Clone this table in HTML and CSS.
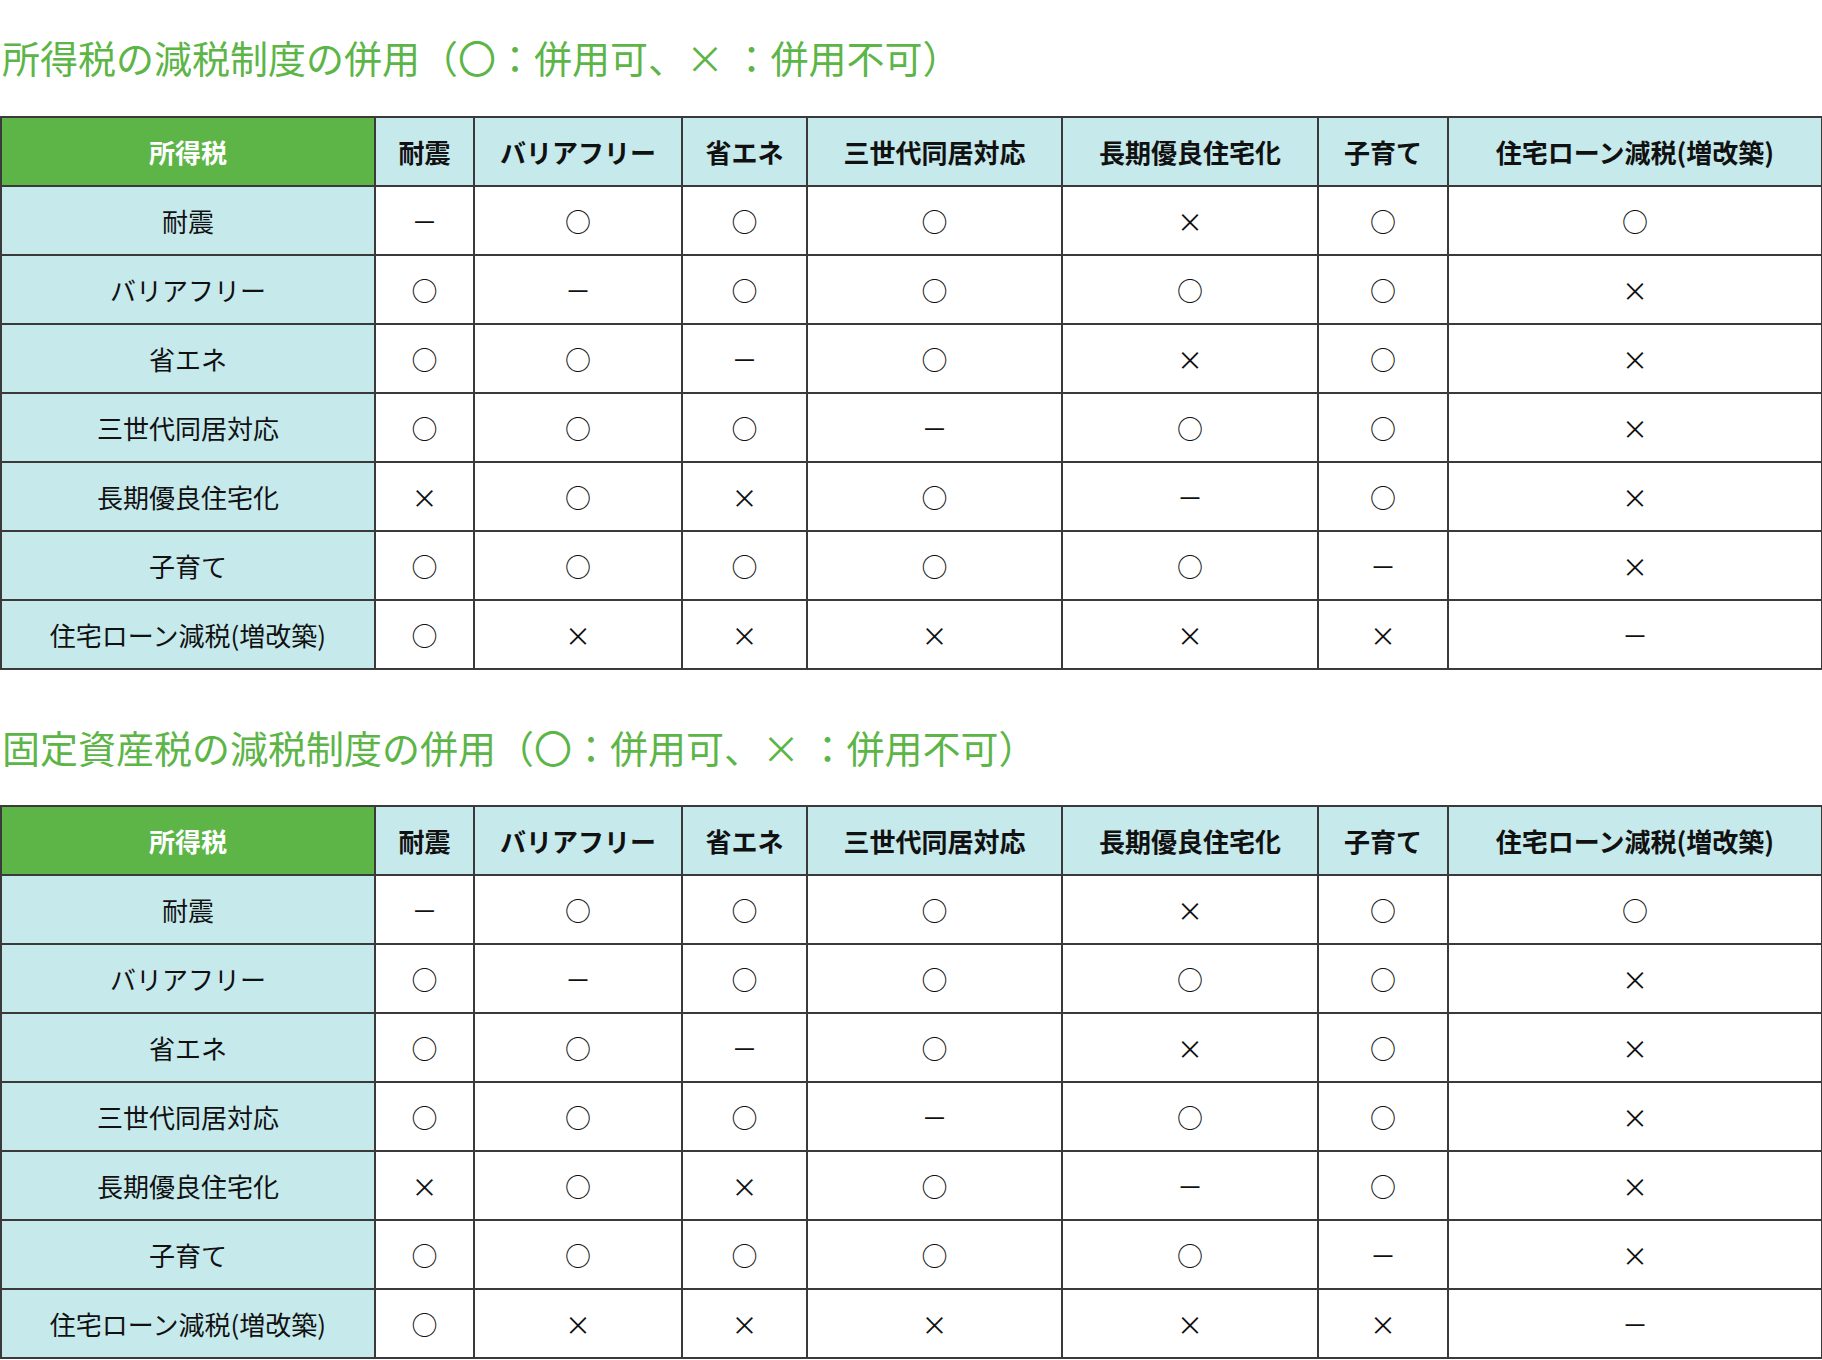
FILE: index.html
```html
<!DOCTYPE html>
<html lang="ja">
<head>
<meta charset="utf-8">
<title>減税制度の併用</title>
<link rel="stylesheet" href="styles.css">
</head>
<body>
<section class="block">
  <h2 class="title">所得税の減税制度の併用（〇：併用可、× ：併用不可）</h2>
  <table class="matrix">
    <colgroup>
      <col class="c-name"><col class="c1"><col class="c2"><col class="c3"><col class="c4"><col class="c5"><col class="c6"><col class="c7">
    </colgroup>
    <thead>
      <tr><th class="corner">所得税</th><th>耐震</th><th>バリアフリー</th><th>省エネ</th><th>三世代同居対応</th><th>長期優良住宅化</th><th>子育て</th><th>住宅ローン減税(増改築)</th></tr>
    </thead>
    <tbody>
      <tr><th>耐震</th><td>－</td><td>○</td><td>○</td><td>○</td><td>×</td><td>○</td><td>○</td></tr>
      <tr><th>バリアフリー</th><td>○</td><td>－</td><td>○</td><td>○</td><td>○</td><td>○</td><td>×</td></tr>
      <tr><th>省エネ</th><td>○</td><td>○</td><td>－</td><td>○</td><td>×</td><td>○</td><td>×</td></tr>
      <tr><th>三世代同居対応</th><td>○</td><td>○</td><td>○</td><td>－</td><td>○</td><td>○</td><td>×</td></tr>
      <tr><th>長期優良住宅化</th><td>×</td><td>○</td><td>×</td><td>○</td><td>－</td><td>○</td><td>×</td></tr>
      <tr><th>子育て</th><td>○</td><td>○</td><td>○</td><td>○</td><td>○</td><td>－</td><td>×</td></tr>
      <tr><th>住宅ローン減税(増改築)</th><td>○</td><td>×</td><td>×</td><td>×</td><td>×</td><td>×</td><td>－</td></tr>
    </tbody>
  </table>
</section>
<section class="block second">
  <h2 class="title">固定資産税の減税制度の併用（〇：併用可、× ：併用不可）</h2>
  <table class="matrix">
    <colgroup>
      <col class="c-name"><col class="c1"><col class="c2"><col class="c3"><col class="c4"><col class="c5"><col class="c6"><col class="c7">
    </colgroup>
    <thead>
      <tr><th class="corner">所得税</th><th>耐震</th><th>バリアフリー</th><th>省エネ</th><th>三世代同居対応</th><th>長期優良住宅化</th><th>子育て</th><th>住宅ローン減税(増改築)</th></tr>
    </thead>
    <tbody>
      <tr><th>耐震</th><td>－</td><td>○</td><td>○</td><td>○</td><td>×</td><td>○</td><td>○</td></tr>
      <tr><th>バリアフリー</th><td>○</td><td>－</td><td>○</td><td>○</td><td>○</td><td>○</td><td>×</td></tr>
      <tr><th>省エネ</th><td>○</td><td>○</td><td>－</td><td>○</td><td>×</td><td>○</td><td>×</td></tr>
      <tr><th>三世代同居対応</th><td>○</td><td>○</td><td>○</td><td>－</td><td>○</td><td>○</td><td>×</td></tr>
      <tr><th>長期優良住宅化</th><td>×</td><td>○</td><td>×</td><td>○</td><td>－</td><td>○</td><td>×</td></tr>
      <tr><th>子育て</th><td>○</td><td>○</td><td>○</td><td>○</td><td>○</td><td>－</td><td>×</td></tr>
      <tr><th>住宅ローン減税(増改築)</th><td>○</td><td>×</td><td>×</td><td>×</td><td>×</td><td>×</td><td>－</td></tr>
    </tbody>
  </table>
</section>
</body>
</html>
```

FILE: styles.css
```css
html, body {
  margin: 0;
  padding: 0;
  background: #ffffff;
}

body {
  font-family: "Noto Sans CJK JP", "Noto Sans", sans-serif;
  color: #111111;
  width: 1822px;
}

.block {
  display: block;
}

.block.second {
  margin-top: 49px;
}

.title {
  margin: 29px 0 31px 2px;
  font-size: 38px;
  line-height: 56px;
  font-weight: 400;
  color: #5cb546;
  white-space: nowrap;
}

.block.second .title {
  margin-bottom: 30px;
}

.matrix {
  border-collapse: collapse;
  table-layout: fixed;
  width: 1821px;
}

.c-name { width: 374px; }
.c1 { width: 99px; }
.c2 { width: 208px; }
.c3 { width: 125px; }
.c4 { width: 255px; }
.c5 { width: 256px; }
.c6 { width: 130px; }
.c7 { width: 374px; }

.matrix th,
.matrix td {
  border: 2px solid #3a3a3a;
  height: 67px;
  padding: 0;
  text-align: center;
  vertical-align: middle;
  font-size: 26px;
  line-height: 1;
  white-space: nowrap;
}

.matrix thead th {
  background: #c6e9ec;
  font-weight: 700;
  color: #111111;
}

.matrix thead th.corner {
  background: #5cb546;
  color: #ffffff;
}

.matrix tbody th {
  background: #c6e9ec;
  font-weight: 400;
}

.matrix td {
  background: #ffffff;
  font-weight: 400;
}
```
